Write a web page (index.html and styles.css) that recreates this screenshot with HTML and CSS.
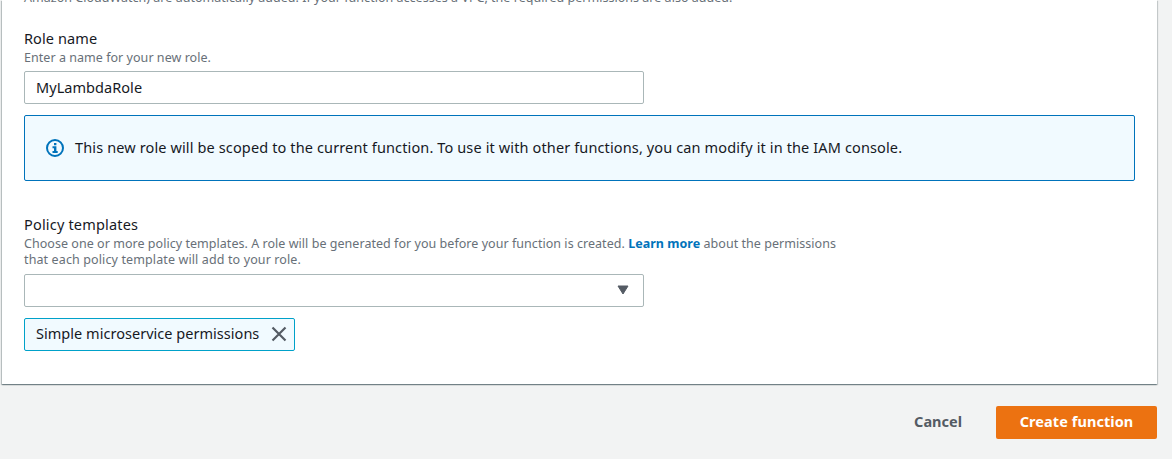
FILE: index.html
```html
<!DOCTYPE html>
<html lang="en">
<head>
<meta charset="utf-8">
<title>Create function</title>
<link rel="stylesheet" href="styles.css">
</head>
<body>
<main class="card">
  <p class="hint hint-intro"><span>Amazon CloudWatch) are automatically added. If your function accesses a VPC, the required permissions are also added.</span></p>
  <section class="field">
    <div class="label"><span class="t-role">Role name</span></div>
    <p class="hint"><span class="t-enter">Enter a name for your new role.</span></p>
    <div class="control"><span class="t-value">MyLambdaRole</span></div>
  </section>
  <div class="alert">
    <svg class="info" viewBox="0 0 18 18" width="18" height="18" aria-hidden="true">
      <circle cx="9" cy="9" r="8" fill="none" stroke="#0073bb" stroke-width="2"/>
      <path d="M8 4h2.4v2.2H8zM6.5 7.3h3.9v4.6h1.3v2H6.5v-2H8V9.2H6.5z" fill="#0073bb"/>
    </svg>
    <span class="t-alert">This new role will be scoped to the current function. To use it with other functions, you can modify it in the IAM console.</span>
  </div>
  <section class="field field-policy">
    <div class="label"><span class="t-policy">Policy templates</span></div>
    <p class="hint"><span class="t-choose">Choose one or more policy templates. A role will be generated for you before your function is created. <a class="link">Learn more</a> about the permissions</span><br><span class="t-that">that each policy template will add to your role.</span></p>
    <div class="control select">
      <svg class="caret" viewBox="0 0 12 10" width="12" height="10" aria-hidden="true"><path d="M1 1h10L6 9z" fill="#545b64" stroke="#545b64" stroke-linejoin="round"/></svg>
    </div>
    <div class="token">
      <span class="t-token">Simple microservice permissions</span>
      <svg class="close" viewBox="0 0 16 16" width="16" height="16" aria-hidden="true"><path d="M1.5 1.5l13 13M14.5 1.5l-13 13" stroke="#545b64" stroke-width="2.2"/></svg>
    </div>
  </section>
</main>
<footer class="actions">
  <button class="btn"><span class="t-cancel">Cancel</span></button>
  <button class="btn btn-primary"><span class="t-create">Create function</span></button>
</footer>
</body>
</html>
```
FILE: styles.css
```css
* { box-sizing: border-box; }
body {
  margin: 0;
  height: 459px;
  overflow: hidden;
  background: #f2f3f3;
  color: #16191f;
  font: 14.5px/22px "Noto Sans", sans-serif;
}
p { margin: 0; }
span { white-space: nowrap; }
.card {
  width: 1155px;
  height: 384px;
  margin-left: 2px;
  padding: 0 22px;
  background: #fff;
  box-shadow: 0 1px 1px 0 rgba(0, 28, 36, .3), 1px 1px 1px 0 rgba(0, 28, 36, .15), -1px 1px 1px 0 rgba(0, 28, 36, .2);
}
.hint { color: #687078; font-size: 12.5px; line-height: 16px; letter-spacing: .04px; }
.hint-intro { height: 27px; letter-spacing: .025px; }
.hint-intro span { display: block; margin-top: -10px; float: left; }
.label { height: 23px; }
.control {
  display: flex;
  align-items: center;
  width: 620px;
  height: 33px;
  margin-top: 5px;
  padding: 0 11px 2px;
  border: 1px solid #aab7b8;
  border-radius: 2px;
  background: #fff;
}
.alert {
  display: flex;
  align-items: center;
  gap: 11px;
  height: 66px;
  margin-top: 11px;
  padding: 0 21px;
  border: 1px solid #0073bb;
  border-radius: 2px;
  background: #f1faff;
}
.t-role { letter-spacing: .1px; }
.t-value { letter-spacing: .05px; }
.t-alert { padding-bottom: 2px; letter-spacing: .13px; }
.t-policy { letter-spacing: .18px; }
.t-that { letter-spacing: .12px; }
.t-token { padding-bottom: 2px; letter-spacing: .03px; }
.t-create { letter-spacing: .07px; }
.field-policy { margin-top: 32px; }
.link { color: #0073bb; font-weight: 700; }
.select { justify-content: flex-end; padding-right: 14px; margin-top: 6px; }
.token {
  display: flex;
  align-items: center;
  justify-content: space-between;
  width: 271px;
  height: 33px;
  margin-top: 11px;
  padding: 0 7px 1px 11px;
  border: 1px solid #00a1c9;
  border-radius: 2px;
  background: #f1faff;
}
.actions {
  display: flex;
  justify-content: flex-end;
  width: 1157px;
  padding-top: 22px;
}
.btn {
  height: 33px;
  padding: 0 23px 3px;
  border: 0;
  border-radius: 2px;
  background: transparent;
  color: #545b64;
  font: 700 14.5px/22px "Noto Sans", sans-serif;
}
.btn-primary { width: 161px; margin-left: 11px; background: #ec7211; color: #fff; }
```
